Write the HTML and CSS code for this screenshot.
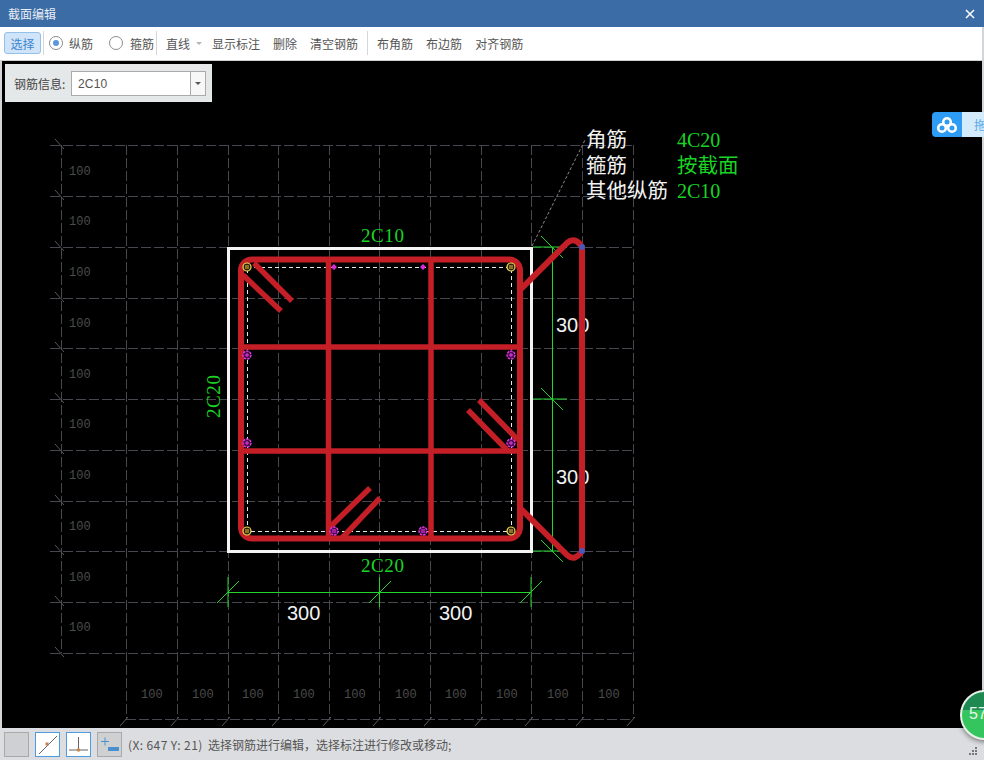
FILE: index.html
```html
<!DOCTYPE html>
<html lang="zh-CN">
<head>
<meta charset="utf-8">
<title>截面编辑</title>
<link rel="stylesheet" href="styles.css">
</head>
<body>
<div class="window">
  <header class="titlebar">
    <span class="title">截面编辑</span>
    <svg class="close" width="10" height="10" viewBox="0 0 10 10"><path d="M1 1L9 9M9 1L1 9"/></svg>
  </header>
  <nav class="toolbar">
    <button class="select-btn">选择</button>
    <i class="sep sep-a"></i>
    <span class="radio radio-a on"></span><span class="radio-label label-a">纵筋</span>
    <span class="radio radio-b"></span><span class="radio-label label-b">箍筋</span>
    <i class="sep sep-a"></i>
    <span class="tool first">直线</span><i class="caret"></i>
    <span class="tool after-caret">显示标注</span>
    <span class="tool">删除</span>
    <span class="tool">清空钢筋</span>
    <i class="sep sep-b"></i>
    <span class="tool first">布角筋</span>
    <span class="tool">布边筋</span>
    <span class="tool">对齐钢筋</span>
  </nav>
  <main class="canvas">
    <svg class="drawing" width="980" height="667" viewBox="2 61 980 667">
      <path class="grid" d="M50 145H633M50 196H633M50 247H633M50 298H633M50 348H633M50 399H633M50 450H633M50 501H633M50 551H633M50 602H633M50 653H633M126 719H633M61 145V653M126 145V719M177 145V719M228 145V719M278 145V719M329 145V719M379 145V719M430 145V719M481 145V719M531 145V719M582 145V719M633 145V719"/>
      <path class="grid-tick" d="M55 139L64 149M55 190L64 200M55 241L64 251M55 292L64 302M55 342L64 352M55 393L64 403M55 444L64 454M55 495L64 505M55 545L64 555M55 596L64 606M55 647L64 657M120 726L128 717M171 726L179 717M222 726L230 717M272 726L280 717M323 726L331 717M373 726L381 717M424 726L432 717M475 726L483 717M525 726L533 717M576 726L584 717M627 726L635 717"/>
      <g class="label-100">
        <text x="69" y="175">100</text><text x="69" y="225">100</text><text x="69" y="276">100</text><text x="69" y="327">100</text><text x="69" y="378">100</text><text x="69" y="428">100</text><text x="69" y="479">100</text><text x="69" y="530">100</text><text x="69" y="581">100</text><text x="69" y="631">100</text>
        <text x="141" y="698">100</text><text x="192" y="698">100</text><text x="242" y="698">100</text><text x="293" y="698">100</text><text x="344" y="698">100</text><text x="395" y="698">100</text><text x="445" y="698">100</text><text x="496" y="698">100</text><text x="547" y="698">100</text><text x="598" y="698">100</text>
      </g>
      <path class="leader" d="M532 246L585 140"/>
      <g class="dim">
        <path d="M552.5 247V551M533 247H567M533 399H567M533 551H567M541 236L563 258M541 388L563 410M541 540L563 562"/>
        <path d="M228 592.5H531M228 577V607M379.500 577V607M531 577V607M217 603L239 581M369 603L391 581M520 603L542 581"/>
      </g>
      <text class="note white" x="287" y="620">300</text>
      <text class="note white" x="439" y="620">300</text>
      <text class="note white" x="556" y="332">300</text>
      <text class="note white" x="556" y="484">300</text>
      <rect class="section" x="228" y="248" width="303" height="303"/>
      <rect class="inner" x="247" y="267" width="264" height="264"/>
      <g class="bars">
        <rect class="stirrup" x="241" y="259.500" width="279" height="279" rx="11"/>
        <path class="tie" d="M328.500 260V539M431 260V539M241 347H520M241 451H520"/>
        <path class="tie" d="M254 263L292 301M243 275L281 311M479 400L518 440M468 410L508 451M370 488L330 527M380 498L342 538"/>
        <path class="stirrup" d="M520 290L567 243Q575 236 582 247V551Q575 562 567 555L522 510"/>
      </g>
      <g class="pins">
        <g class="pin-y"><circle cx="247" cy="267" r="4"/><circle cx="511" cy="267" r="4"/><circle cx="247" cy="531" r="4"/><circle cx="511" cy="531" r="4"/></g>
        <path class="pin-y-mark" d="M245 266H249M245 268H249M509 266H513M509 268H513M245 530H249M245 532H249M509 530H513M509 532H513"/>
        <g class="pin-m"><circle cx="247" cy="355" r="4"/><circle cx="511" cy="355" r="4"/><circle cx="247" cy="443" r="4"/><circle cx="511" cy="443" r="4"/><circle cx="334" cy="531" r="4"/><circle cx="423" cy="531" r="4"/></g>
        <path class="pin-m-mark" d="M245 355H249M247 353V357M509 355H513M511 353V357M245 443H249M247 441V445M509 443H513M511 441V445M332 530H336M332 532H336M421 530H425M421 532H425"/>
        <path class="pin-dot" d="M334 264L337 267L334 270L331 267ZM423 264L426 267L423 270L420 267Z"/>
        <circle class="pin-b" cx="582" cy="247" r="3"/><circle class="pin-b" cx="582" cy="551" r="3"/>
      </g>
      <text class="note green" x="361" y="242">2C10</text>
      <text class="note green" x="361" y="572">2C20</text>
      <text class="note green" transform="translate(220 418) rotate(-90)">2C20</text>
      <g class="legend">
        <text class="white" x="586" y="147">角筋</text>
        <text class="white" x="586" y="173">箍筋</text>
        <text class="white" x="586" y="198">其他纵筋</text>
        <text class="green latin" x="677" y="147">4C20</text>
        <text class="green" x="677" y="173">按截面</text>
        <text class="green latin" x="677" y="198">2C10</text>
      </g>
    </svg>
    <section class="info-panel">
      <label class="info-label">钢筋信息:</label>
      <div class="combo"><span class="combo-value">2C10</span><span class="combo-btn"><i class="caret dark"></i></span></div>
    </section>
  </main>
  <footer class="statusbar">
    <span class="stat-btn plain"></span>
    <span class="stat-btn active"><svg width="23" height="23" viewBox="0 0 23 23"><path class="ic-line" d="M3 21L21 3"/><rect class="ic-pt" x="9.500" y="9.500" width="3" height="3"/></svg></span>
    <span class="stat-btn active"><svg width="23" height="23" viewBox="0 0 23 23"><path class="ic-line" d="M2 17H21M11.500 4V17"/><circle class="ic-pt" cx="11.500" cy="17" r="1.800"/></svg></span>
    <span class="stat-btn plain"><svg width="23" height="23" viewBox="0 0 23 23"><path class="ic-plus" d="M3 8.500H11M7 4.500V12.500"/><rect class="ic-bar" x="10" y="14" width="11" height="4"/></svg></span>
    <span class="status-text"><span class="coords">(X: 647 Y: 21)</span>&nbsp; 选择钢筋进行编辑，选择标注进行修改或移动;</span>
    <svg class="grip" width="10" height="10" viewBox="0 0 10 10"><path d="M7 1h2v2H7zM4 4h2v2H4zM7 4h2v2H7zM1 7h2v2H1zM4 7h2v2H4zM7 7h2v2H7z"/></svg>
  </footer>
  <aside class="cloud">
    <span class="cloud-icon"><svg width="22" height="18" viewBox="0 0 22 18"><circle cx="11" cy="6" r="3.800"/><circle cx="6" cy="12" r="3.800"/><circle cx="16" cy="12" r="3.800"/></svg></span>
    <span class="cloud-text">拖</span>
  </aside>
  <aside class="ball"><span class="ball-num">57</span></aside>
</div>
</body>
</html>
```
FILE: styles.css
```css
* { box-sizing: border-box; }
html, body { margin: 0; padding: 0; background: #d3d5d9; }
body { font-family: "Noto Sans CJK SC", "Liberation Sans", sans-serif; font-size: 12px; }
.window { position: relative; width: 984px; height: 760px; overflow: hidden; display: flex; flex-direction: column; background: #d3d5d9; }

.titlebar { height: 27px; flex: none; display: flex; align-items: center; justify-content: space-between; padding: 0 9px 0 8px; background: #3b6ca5; color: #e8eef6; }
.close path { stroke: #fff; stroke-width: 1.500; fill: none; }

.toolbar { height: 34px; flex: none; display: flex; align-items: center; padding: 0 0 1px 4px; margin-right: 2px; background: #fff; border-bottom: 1px solid #cfd1d4; color: #555; }
.select-btn { width: 37px; height: 22px; padding: 0; font: inherit; color: #3d86cf; background: #cfe4f8; border: 1px solid #95c0e8; border-radius: 3px; }
.sep { display: block; width: 1px; height: 24px; background: #d4d6d8; }
.sep-a { margin-left: 2px; }
.sep-b { margin-left: 9px; }
.radio { width: 14px; height: 14px; border: 1px solid #8d8d8d; border-radius: 50%; background: #fff; position: relative; }
.radio-a { margin-left: 5px; }
.radio-b { margin-left: 16px; }
.radio.on::after { content: ""; position: absolute; left: 3px; top: 3px; width: 6px; height: 6px; border-radius: 50%; background: #5a94dc; }
.label-a { margin-left: 6px; }
.label-b { margin-left: 7px; }
.tool { margin-left: 13px; }
.tool.first { margin-left: 9px; }
.tool.after-caret { margin-left: 10px; }
.caret { display: block; width: 0; height: 0; margin-left: 6px; border: 3px solid transparent; border-top: 3px solid #b5b5b5; border-bottom: 0; }
.caret.dark { margin: 0; border-top-color: #555; }

.canvas { position: relative; flex: 1; margin: 0 2px; background: #000; overflow: hidden; }
.drawing { display: block; }
.grid { fill: none; stroke: #47474f; stroke-width: 1; stroke-dasharray: 10 3; shape-rendering: crispEdges; }
.grid-tick { fill: none; stroke: #5a5a5a; stroke-width: 1; }
.label-100 text { font: 12px "Liberation Mono", monospace; fill: #4c4c4c; }
.leader { stroke: #8a8a8a; stroke-width: 1; stroke-dasharray: 3 2; fill: none; }
.dim path { fill: none; stroke: #22d52c; stroke-width: 1; }
.note { font: 19px "Liberation Serif", serif; letter-spacing: 0.6px; }
.note.white { font-family: "Liberation Sans", sans-serif; font-size: 20px; font-weight: 400; letter-spacing: 0; }
.white { fill: #f2f2f2; }
.green { fill: #19d424; }
.section { fill: none; stroke: #f4f4f4; stroke-width: 3; shape-rendering: crispEdges; }
.inner { fill: none; stroke: #e8e8e8; stroke-width: 1; stroke-dasharray: 4 3; shape-rendering: crispEdges; }
.stirrup { fill: none; stroke: #c41e27; stroke-width: 6; stroke-linecap: round; stroke-linejoin: round; }
.tie { fill: none; stroke: #c41e27; stroke-width: 5.500; }
.pin-y circle { fill: #2a2208; stroke: #f0d855; stroke-width: 1.200; }
.pin-y-mark { fill: none; stroke: #f0c040; stroke-width: 1; }
.pin-m circle { fill: #4a0c4a; stroke: #ee38ee; stroke-width: 1.300; stroke-dasharray: 2.500 1; }
.pin-m-mark { fill: none; stroke: #ee38ee; stroke-width: 1; }
.pin-dot { fill: #d62fd6; }
.pin-b { fill: #4a56b8; }
.legend text { font: 20.500px "Noto Sans CJK SC", serif; }
.legend text.latin { font: 20px "Liberation Serif", serif; letter-spacing: 0; }

.info-panel { position: absolute; left: 3px; top: 3px; width: 207px; height: 38px; display: flex; align-items: center; padding-left: 9px; background: #e5e8e9; color: #444; }
.info-label { width: 57px; }
.combo { width: 135px; height: 25px; display: flex; align-items: center; justify-content: space-between; background: #fff; border: 1px solid #aaa; }
.combo-value { padding: 2px 0 0 6px; font-family: "Liberation Sans", sans-serif; font-size: 12px; letter-spacing: 0.2px; color: #555; }
.combo-btn { width: 15px; height: 23px; display: flex; align-items: center; justify-content: center; border-left: 1px solid #aaa; background: #f7f7f7; }

.statusbar { height: 32px; flex: none; display: flex; align-items: center; gap: 6px; padding: 0 6px 0 4px; background: #dcdde0; color: #555; }
.stat-btn { width: 25px; height: 25px; display: block; border: 1px solid #a9a9a9; background: #cfd0d2; }
.stat-btn.active { background: #fff; border-color: #4f9be0; }
.stat-btn svg { display: block; }
.ic-line { fill: none; stroke: #666; stroke-width: 1; }
.ic-pt { fill: #c8844a; }
.ic-plus { fill: none; stroke: #4a8fd0; stroke-width: 1; }
.ic-bar { fill: #4a8fd0; }
.status-text { white-space: nowrap; }
.coords { letter-spacing: 0.4px; }
.grip { margin-left: auto; align-self: flex-end; margin-bottom: 4px; }
.grip path { fill: #777; }

.cloud { position: absolute; left: 932px; top: 112px; width: 60px; height: 25px; display: flex; border-radius: 4px 0 0 4px; overflow: hidden; }
.cloud-icon { width: 30px; display: flex; align-items: center; justify-content: center; background: #2e9bf4; }
.cloud-icon circle { fill: none; stroke: #fff; stroke-width: 2.600; }
.cloud-text { flex: 1; padding-left: 12px; line-height: 25px; background: #d4ebfb; color: #5aa9ea; }

.ball { position: absolute; left: 960px; top: 690px; width: 50px; height: 50px; border-radius: 50%; border: 2px solid #e6f2e8; background: linear-gradient(#1e8a52 0, #1e8a52 40%, #35c55e 40%, #35c55e 100%); box-shadow: 0 2px 5px rgba(0,0,0,.45); }
.ball-num { position: absolute; left: 7px; top: 13px; font: 16px "Liberation Sans", sans-serif; color: #e8f7ea; }
```
